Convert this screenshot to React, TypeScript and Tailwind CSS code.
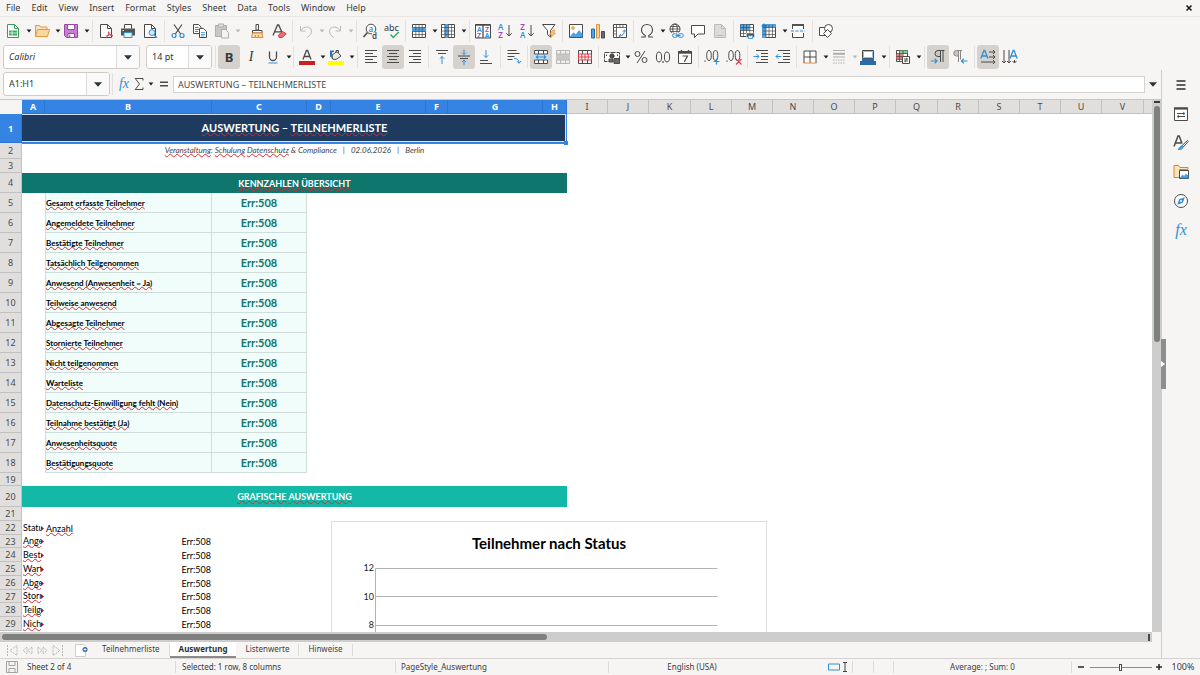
import React from 'react';

type Kids = { children?: React.ReactNode };

const BLUE = '#2f8fd8';
const INK = '#4a4a48';

const Ico = ({ children }: Kids) => (
  <svg viewBox="0 0 16 16" className="size-4 shrink-0 overflow-visible" fill="none" stroke={INK} strokeWidth="1" aria-hidden="true">
    {children}
  </svg>
);

const Caret = ({ dim = false }: { dim?: boolean }) => (
  <svg viewBox="0 0 6 4" className="h-1 w-1.5 shrink-0" aria-hidden="true">
    <path d="M0.6 0.4h4.8L3 3.6z" fill={dim ? '#b9b8b6' : '#1d1d1d'} />
  </svg>
);

type ToolProps = { label: string; active?: boolean; dim?: boolean; drop?: boolean; icon: React.ReactNode };

const Tool = ({ label, active, dim, drop, icon }: ToolProps) => (
  <span className="flex shrink-0 items-center">
    <button
      type="button"
      aria-label={label}
      aria-pressed={active}
      className={`flex h-6 w-[22px] items-center justify-center rounded-[3px] ${active ? 'bg-[#d5d1cd]' : ''}`}
    >
      {icon}
    </button>
    {drop && (
      <button type="button" aria-label={`${label} options`} className="flex h-6 w-[7px] items-center justify-center pl-[3px]">
        <Caret dim={dim} />
      </button>
    )}
  </span>
);

const Sep = ({ wide = false }: { wide?: boolean }) => (
  <span className={`flex h-[22px] shrink-0 justify-center ${wide ? 'w-1.5' : 'w-[5px]'}`}>
    <span className="w-px bg-[#e3e1df]" />
  </span>
);

/* ---------- standard toolbar icons ---------- */

const NewDoc = (
  <Ico>
    <path d="M2.500 1.500h7l4 4v9h-11z" fill="#fff" stroke="#3d9a5b" />
    <path d="M9.500 1.500v4h4" stroke="#3d9a5b" />
    <path d="M4 7.500h8v5H4z" fill="#3fa863" stroke="none" />
    <path d="M4 10h8M7 8v4.500" stroke="#fff" strokeWidth=".7" />
  </Ico>
);
const Open = (
  <Ico>
    <path d="M1.500 13.500v-11h4l1 1.500h6.500v3" fill="#fbe3bd" stroke="#e59a3c" />
    <path d="M1.500 13.500 3.600 6.500h12l-2.200 7z" fill="#fad79f" stroke="#e59a3c" />
  </Ico>
);
const Save = (
  <Ico>
    <path d="M1.500 1.500h13v13h-11l-2-2z" fill="#c77fd2" stroke="#9a45a8" />
    <path d="M4.500 1.500h7v5h-7z" fill="#fff" stroke="#9a45a8" />
    <path d="M5 10.500h6.500v4H5z" fill="#fff" stroke="#9a45a8" />
    <path d="M6.800 11.500v2.500" stroke="#9a45a8" />
  </Ico>
);
const Pdf = (
  <Ico>
    <path d="M2.500 1.500h7l4 4v9h-11z" fill="#fcfcfc" />
    <path d="M9.500 1.500v4h4" />
    <path d="M8 14.800c2-1.500 3-4 2.700-6.300M10.700 9c.6 2.600 2 3.800 4.300 4M8 13.200c2-1.300 4.500-1.700 7-.6" stroke="#e4384a" />
  </Ico>
);
const Print = (
  <Ico>
    <path d="M4.500 5.500v-4h7v4" fill="#fff" />
    <path d="M1 5.500h14v7H1z" fill="#555553" stroke="none" />
    <path d="M4 9.500h8v5H4z" fill="#e8f3fc" stroke={BLUE} />
    <path d="M2.500 7.500h1.500" stroke="#fff" />
  </Ico>
);
const Preview = (
  <Ico>
    <path d="M2.500 1.500h7l4 4v9h-11z" fill="#fcfcfc" />
    <path d="M9.500 1.500v4h4" />
    <circle cx="10" cy="9.600" r="2.900" fill="#d7eafa" stroke={BLUE} />
    <path d="m12 11.800 3 3" stroke={BLUE} strokeWidth="1.300" />
  </Ico>
);
const Cut = (
  <Ico>
    <path d="M4 1.500 10.700 11M12 1.500 5.300 11" strokeWidth="1.200" />
    <circle cx="4" cy="12.500" r="2" stroke={BLUE} strokeWidth="1.200" />
    <circle cx="12" cy="12.500" r="2" stroke={BLUE} strokeWidth="1.200" />
  </Ico>
);
const Copy = (
  <Ico>
    <path d="M1.500 1.500h5l2.500 2.500v6.500H1.500z" fill="#fff" />
    <path d="M3 4.500h3.500M3 6.500h4M3 8.500h3" stroke={BLUE} />
    <path d="M7.500 5.500h4l3 3v6h-7z" fill="#fff" />
    <path d="M9 9.500h4M9 11.500h4M9 13h3" stroke={BLUE} strokeWidth=".8" />
  </Ico>
);
const Paste = (
  <Ico>
    <path d="M1.500 2.500h11v11h-11z" fill="#c9c7c5" stroke="#b0aeac" />
    <path d="M4.500 1h5v3h-5z" fill="#e4e2e0" stroke="#b0aeac" />
    <path d="M7.500 6.500h4l3 3v5.500h-7z" fill="#f4f3f2" stroke="#b0aeac" />
  </Ico>
);
const Brush = (
  <Ico>
    <path d="M7 1.500h2.500v5.500H7z" fill="#fff" />
    <path d="M3.500 7.500h9.500v2.500H3.500z" fill="#fff" />
    <path d="M3.500 10h9.500l1 4.500H2.500z" fill="#fbd9a4" stroke="#e68e2e" />
    <path d="M6.500 12v2.500M9.500 12v2.500" stroke="#e68e2e" />
  </Ico>
);
const ClearFmt = (
  <Ico>
    <path d="M2 12.500 6.500 2h1.200L11 9.500M3.700 8.800h6.500" strokeWidth="1.300" />
    <path d="m7.500 12 4-3.500 3.700 2.300L11 14.700l-3-.4z" fill="#ee6d77" stroke="#dd3b46" />
  </Ico>
);
const Undo = (
  <Ico>
    <path d="M2.500 3v5h5" stroke="#bdbbb9" />
    <path d="M2.700 7.800C5 3 13 2.500 13.500 8c.2 3-2 5-4.500 6.500" stroke="#bdbbb9" />
  </Ico>
);
const Redo = (
  <Ico>
    <path d="M13.500 3v5h-5" stroke="#bdbbb9" />
    <path d="M13.300 7.800C11 3 3 2.500 2.500 8c-.2 3 2 5 4.500 6.500" stroke="#bdbbb9" />
  </Ico>
);

const Glyph = ({ x, y, s = 7, c, t }: { x: number; y: number; s?: number; c: string; t: string }) => (
  <text x={x} y={y} fontSize={s} fontWeight="600" fill={c} stroke="none" fontFamily="Noto Sans, sans-serif">{t}</text>
);

const Find = (
  <Ico>
    <circle cx="9" cy="6" r="4.800" fill="#fff" />
    <path d="M5.500 9.500 1.500 14" strokeWidth="1.600" />
    <Glyph x={6.600} y={8.500} s={8} c={BLUE} t="a" />
    <path d="M10 9.500h5V16h-5z" fill="#f6f5f4" stroke="none" />
    <Glyph x={10} y={15.500} s={8} c={INK} t="d" />
  </Ico>
);
const Spell = (
  <Ico>
    <text x="0" y="7.500" fontSize="9" fill="#333" stroke="none" fontFamily="Noto Sans, sans-serif">abc</text>
    <path d="m6.500 11.500 2.700 3L14.800 9" stroke="#2fa866" strokeWidth="1.300" />
  </Ico>
);
const Rows = (
  <Ico>
    <path d="M1.500 1.500h13v13h-13z" fill="#fff" />
    <path d="M1 4.500h14v4H1z" fill="#4ba3e6" stroke="none" />
    <path d="M1.500 4.500h13M1.500 8.500h13M1.500 11.500h13M4.800 1.500v13M8 1.500v13M11.200 1.500v13" strokeWidth=".7" />
  </Ico>
);
const Cols = (
  <Ico>
    <path d="M1.500 1.500h13v13h-13z" fill="#fff" />
    <path d="M4.800 1h3.700v14H4.800z" fill="#4ba3e6" stroke="none" />
    <path d="M1.500 4.500h13M1.500 8h13M1.500 11.500h13M4.800 1.500v13M8.500 1.500v13M11.500 1.500v13" strokeWidth=".7" />
  </Ico>
);
const Sort = (
  <Ico>
    <path d="M.5 1.500h15v13.500H.5z" fill="#fff" />
    <path d="M.5 2h15M8 1.500V15" strokeWidth="1.300" />
    <Glyph x={2} y={8.500} c={BLUE} t="A" />
    <Glyph x={2} y={14.500} c="#a347b8" t="Z" />
    <Glyph x={10} y={8.500} c="#a347b8" t="Z" />
    <Glyph x={9.700} y={14.500} c={BLUE} t="A" />
  </Ico>
);
const AZ = (
  <Ico>
    <Glyph x={1} y={7} s={8} c={BLUE} t="A" />
    <Glyph x={1.300} y={15} s={8} c="#a347b8" t="Z" />
    <path d="M12 2v11M9.300 10.300 12 13l2.700-2.700" />
  </Ico>
);
const ZA = (
  <Ico>
    <Glyph x={1.300} y={7} s={8} c="#a347b8" t="Z" />
    <Glyph x={1} y={15} s={8} c={BLUE} t="A" />
    <path d="M12 2v11M9.300 10.300 12 13l2.700-2.700" />
  </Ico>
);
const Filter = (
  <Ico>
    <path d="M1.500 1.500h12.500L9.500 7.500v6.500l-3-2.500v-4z" fill="#fff" />
    <path d="m12 7-3.500 4.500h2.500L9.500 15l5-5h-2.500l2-3z" fill="#fbc77e" stroke="#e68e2e" strokeWidth=".7" />
  </Ico>
);
const Picture = (
  <Ico>
    <path d="M1.500 1.500h13v13h-13z" fill="#fff" />
    <circle cx="5" cy="5" r="1.500" fill="#f5b35d" stroke="#e68e2e" strokeWidth=".6" />
    <path d="m2 13.800 3.500-4 2.500 2 3-4.300 3.200 3.500v3z" fill="#4ba3e6" stroke={BLUE} strokeWidth=".6" />
  </Ico>
);
const ChartIco = (
  <Ico>
    <path d="M1.500 6h3v9h-3z" fill="#4ba3e6" stroke="#1f6fb5" />
    <path d="M6.500 1.500h3V15h-3z" fill="#fbd39a" stroke="#e68e2e" />
    <path d="M11.500 8.500h3V15h-3z" fill="#6a6a68" stroke={INK} />
  </Ico>
);
const Pivot = (
  <Ico>
    <path d="M1.500 1.500h13v13h-13z" fill="#fff" />
    <path d="M1.500 4.500h13M4.500 1.500v13M8 1.500v3M11 1.500v3M1.500 8h3M1.500 11h3" strokeWidth=".8" />
    <path d="M7 13c3.500 0 5.500-2 5.500-5.500M10.800 8.800l1.700-2 1.700 2M8.800 11.300l-2 1.700 2 1.700" stroke={BLUE} />
  </Ico>
);
const Omega = (
  <Ico>
    <path d="M2 14h4.200v-1.600C3.700 11 2.500 9.200 2.500 6.900 2.500 3.600 4.900 1.500 8 1.500s5.500 2.100 5.500 5.400c0 2.300-1.200 4.100-3.700 5.500V14H14" strokeWidth="1.100" />
  </Ico>
);
const LinkIco = (
  <Ico>
    <circle cx="7" cy="6" r="5" fill="#fff" />
    <ellipse cx="7" cy="6" rx="2.200" ry="5" />
    <path d="M2 6h10M2.600 3.500h8.800M2.600 8.500h8.800" strokeWidth=".8" />
    <path d="M4 9.500h12V16H4z" fill="#f6f5f4" stroke="none" />
    <rect x="4.500" y="10.700" width="5" height="3.600" rx="1.700" stroke={BLUE} />
    <rect x="10.300" y="10.700" width="5" height="3.600" rx="1.700" stroke={BLUE} />
    <path d="M7.500 12.500h5" stroke={BLUE} />
  </Ico>
);
const Comment = (
  <Ico>
    <path d="M1.500 2.500h13v8.500H8l-3.500 3.500V11h-3z" fill="#fff" />
  </Ico>
);
const HeadFoot = (
  <Ico>
    <path d="M2.500 1.500h7l4 4v9h-11z" fill="#dddbd9" stroke="#bdbbb9" />
    <path d="M9.500 1.500v4h4M4.500 12.500h7" stroke="#bdbbb9" />
  </Ico>
);
const PrintArea = (
  <Ico>
    <path d="M1.500 1.500h13v12h-13z" fill="#fff" />
    <path d="M1.500 1.500h9v6h-9z" fill="#4ba3e6" stroke="none" />
    <path d="M1.500 4.500h13M1.500 7.500h13M1.500 10.500h13M4.500 1.500v12M7.500 1.500v12M10.800 1.500v12" strokeWidth=".7" />
    <path d="M7.500 10h8v4.500h-8z" fill="#555553" stroke="#f6f5f4" strokeWidth=".6" />
    <path d="M9.300 12.500h4.400v3H9.300z" fill="#d7eafa" stroke={BLUE} strokeWidth=".8" />
  </Ico>
);
const Freeze = (
  <Ico>
    <path d="M1.500 1.500h13v13h-13z" fill="#fff" />
    <path d="M1 1h14v3.500H5V15H1z" fill="#4ba3e6" stroke="none" />
    <path d="M1.500 4.500h13M1.500 8h13M1.500 11.500h13M5 1.500v13M8 1.500v13M11.500 1.500v13" strokeWidth=".7" />
    <path d="M3 .5v5M.5 3h5" stroke="#1f6fb5" />
  </Ico>
);
const Split = (
  <Ico>
    <path d="M2.500 6V2h11v4M2.500 10v4.500h11V10" fill="#fff" />
    <path d="M2 2h12" strokeWidth="1.800" />
    <path d="M1 8h14" stroke={BLUE} strokeDasharray="3 1.500" />
  </Ico>
);
const Shapes = (
  <Ico>
    <path d="M1.500 4.500h8v8h-8z" fill="#fff" />
    <circle cx="10.500" cy="5.500" r="4" fill="#fff" />
    <path d="m9.500 6.500 4 4-4 4-4-4z" fill="#fff" />
  </Ico>
);

/* ---------- formatting toolbar icons ---------- */

const Bold = <span className="text-[13px] leading-none font-bold text-[#3a3a3a]">B</span>;
const Italic = <span className="font-['Liberation_Serif',serif] text-sm leading-none italic text-[#3a3a3a]">I</span>;
const Underline = (
  <Ico>
    <path d="M4.500 2.500v5.500a3.500 3.500 0 0 0 7 0V2.500" strokeWidth="1.300" />
    <path d="M3.500 14h9" stroke={BLUE} />
  </Ico>
);
const FontColor = (
  <Ico>
    <path d="M4 10.500 7.400 1.500h1.200l3.400 9M5.200 7.500h5.600" strokeWidth="1.300" />
    <path d="M0 12h16v4H0z" fill="#c9211e" stroke="none" />
  </Ico>
);
const Highlight = (
  <Ico>
    <path d="m4 6 5-3.500L13 7l-5 3.500-3.500-.5z" fill="#e9e8e6" />
    <path d="M8 4V1.500h2.500V4" />
    <path d="M2 1.500h4V3H4.300L3.700 9 2 7.500z" fill="#2472b8" stroke="none" />
    <path d="M0 12h16v4H0z" fill="#ff0" stroke="none" />
  </Ico>
);
const AlignL = <Ico><path d="M2 1.500h12M2 4.500h8M2 7.500h12M2 10.500h8M2 13.500h12" /></Ico>;
const AlignC = <Ico><path d="M2 1.500h12M4 4.500h8M2 7.500h12M4 10.500h8M2 13.500h12" /></Ico>;
const AlignR = <Ico><path d="M2 1.500h12M6 4.500h8M2 7.500h12M6 10.500h8M2 13.500h12" /></Ico>;
const Top = (
  <Ico>
    <path d="M2 1.500h12M4 4.500h8" />
    <path d="M8 15V7.500M5.800 9.700 8 7.500l2.200 2.200" stroke={BLUE} />
  </Ico>
);
const Middle = (
  <Ico>
    <path d="M2 7h12M4 9.500h8" />
    <path d="M8 .5v5M6 3.500l2 2 2-2M8 16v-5M6 13l2-2 2 2" stroke={BLUE} />
  </Ico>
);
const Bottom = (
  <Ico>
    <path d="M2 14.500h12M2 11.500h8" />
    <path d="M8 1v7.500M5.800 6.300 8 8.500l2.200-2.200" stroke={BLUE} />
  </Ico>
);
const Wrap = (
  <Ico>
    <path d="M1.500 1.500h9M1.500 4.500h12M1.500 7.500h7M1.500 10.500h5" />
    <path d="M8 9.500c3 0 5 1 5 4.500M10.800 12l2.200 2.300L15 12" stroke={BLUE} />
  </Ico>
);
const Merge = (
  <Ico>
    <path d="M1.500 1.500h13v13h-13z" fill="#fff" />
    <path d="M1 5h14v6H1z" fill="#bfe0f8" stroke="none" />
    <path d="M1.500 5h13M1.500 11h13M5.500 1.500V5M10.500 1.500V5M5.500 11v3.500M10.500 11v3.500" />
    <path d="M3 8h10M5 6.300 3.300 8 5 9.700M11 6.300 12.700 8 11 9.700" stroke={BLUE} strokeWidth="1.200" />
  </Ico>
);
const MergeCells = (
  <Ico>
    <path d="M1.500 1.500h13v13h-13z" fill="#f0efee" stroke="#b9b7b5" />
    <path d="M1 5h14v6H1z" fill="#c9c7c5" stroke="none" />
    <path d="M1.500 5h13M1.500 11h13M5.500 1.500V5M10.500 1.500V5M5.500 11v3.500M10.500 11v3.500" stroke="#b9b7b5" />
  </Ico>
);
const SplitCells = (
  <Ico>
    <path d="M1.500 1.500h13v13h-13z" fill="#fff" />
    <path d="M5.500 1.500V5M10.500 1.500V5M5.500 11v3.500M10.500 11v3.500" />
    <path d="M1.500 5h13v6h-13zM4.800 5v6M8 5v6M11.200 5v6M1.500 8h13" fill="#fff" stroke="#dd3b46" />
  </Ico>
);
const Currency = (
  <Ico>
    <path d="M.5 3.500h15v9H.5z" fill="#fff" strokeDasharray="5 1" />
    <circle cx="8" cy="7" r="2.200" fill={INK} />
    <path d="M10 9.500h5.500v5H10zM5 10h4v3H5z" fill="#6a6a68" stroke={INK} />
    <path d="M2.500 5.500v1.500M13.500 5.500V7" />
  </Ico>
);
const Percent = (
  <Ico>
    <circle cx="4.500" cy="5" r="2.500" />
    <circle cx="11.500" cy="11" r="2.500" />
    <path d="M12 2 4 14" />
  </Ico>
);
const Num = (
  <Ico>
    <ellipse cx="4" cy="8" rx="2.600" ry="5" />
    <ellipse cx="12" cy="8" rx="2.600" ry="5" />
    <path d="M8 12v2" strokeWidth="1.200" />
  </Ico>
);
const DateIco = (
  <Ico>
    <path d="M1.500 2.500h13v12h-13z" fill="#fff" />
    <path d="M1 3.500h14" strokeWidth="2.400" />
    <path d="M4.500 1v2M11.500 1v2" strokeWidth="1.400" />
    <path d="M5.500 7h5L7.300 13" strokeWidth="1.200" />
  </Ico>
);
const AddDec = (
  <Ico>
    <path d="M1 11.500v1.200" strokeWidth="1.200" />
    <ellipse cx="5" cy="6.500" rx="2.300" ry="5" />
    <ellipse cx="11.500" cy="6.500" rx="2.300" ry="5" />
    <path d="M12.500 9.500v6M9.500 12.500h6" stroke={BLUE} strokeWidth="1.200" />
  </Ico>
);
const DelDec = (
  <Ico>
    <path d="M1 11.500v1.200" strokeWidth="1.200" />
    <ellipse cx="5" cy="6.500" rx="2.300" ry="5" />
    <ellipse cx="11.500" cy="6.500" rx="2.300" ry="5" />
    <path d="m10 10 5.500 5.500M15.500 10 10 15.500" stroke="#e4384a" strokeWidth="1.100" />
  </Ico>
);
const Indent = (
  <Ico>
    <path d="M3 1.500h12M8 4.500h7M8 7.500h7M8 10.500h7M3 13.500h12" />
    <path d="M.5 7.500h5.500M3.700 5.200 6 7.500 3.700 9.800" stroke={BLUE} />
  </Ico>
);
const Outdent = (
  <Ico>
    <path d="M3 1.500h12M8 4.500h7M8 7.500h7M8 10.500h7M3 13.500h12" />
    <path d="M1 7.500h5.500M3.300 5.200 1 7.500l2.300 2.300" stroke={BLUE} />
  </Ico>
);
const Borders = (
  <Ico>
    <path d="M2 14V2h12v12M8 2v12M2 8h12" fill="#fff" />
    <path d="M1.500 14h13" stroke="#e68e2e" />
  </Ico>
);
const LineStyle = (
  <Ico>
    <path d="M2 1.500h12M2 8h12" stroke="#b0aeac" />
    <path d="M2 4.800h12" stroke="#b0aeac" strokeWidth="2" />
    <path d="M2 11h12M2 14h12" stroke="#b0aeac" strokeDasharray="1.500 1" />
  </Ico>
);
const BorderColor = (
  <Ico>
    <path d="M2.500 1.500h11v8h-11z" fill="#fff" />
    <path d="M3.500 2.500h9v6h-9z" stroke="#8bc3ee" />
    <path d="M0 12h16v4H0zM2 9.500h12V12H2z" fill="#2a6ba8" stroke="none" />
  </Ico>
);
const Cond = (
  <Ico>
    <path d="M1.500 1.500h11v11h-11z" fill="#fff" />
    <path d="M4.500 1.500h8v3h-8z" fill="#7fcf8c" stroke="none" />
    <path d="M1.500 5h6v5h-6z" fill="#ef7b80" stroke="none" />
    <path d="M1.500 4.500h11M1.500 7.500h11M1.500 10.500h11M4.500 1.500v11M8 1.500v11" strokeWidth=".8" />
    <path d="M7.500 7.500h7v7h-7z" fill="#fff" />
    <path d="M9 10h4M9 12h4M12 8.800 10 13.300" strokeWidth=".9" />
  </Ico>
);
const Ltr = (
  <Ico>
    <path d="M10.500 13V1.500H8a3 3 0 0 0 0 6h2.500" fill="#c9c5c1" />
    <path d="M13 13V1.500M14.500 1.500h-4" />
    <path d="M1 12h6M4.700 9.700 7 12l-2.300 2.300" stroke={BLUE} strokeWidth="1.200" />
  </Ico>
);
const Rtl = (
  <Ico>
    <path d="M6.500 13V1.500H4.500a2.700 2.700 0 0 0 0 5.500h2" fill="#c9c7c5" stroke="#8a8886" />
    <path d="M8.500 10.500v-9M10 1.500H6.500" stroke="#8a8886" />
    <path d="M9.500 12h6M11.800 9.700 9.500 12l2.300 2.300" stroke={BLUE} strokeWidth="1.200" />
  </Ico>
);
const TextLr = (
  <Ico>
    <path d="M.8 9.500 4 1.500h.8L8 9.500M2 7h5" stroke={BLUE} strokeWidth="1.300" />
    <path d="M9 3h6M13 1l2 2-2 2M9 8h6M13 6l2 2-2 2M1 13h14M13 11l2 2-2 2" />
  </Ico>
);
const TextTd = (
  <Ico>
    <path d="M8 9.500 11.200 1.500h.8L15.200 9.500M9 7h5" stroke={BLUE} strokeWidth="1.300" />
    <path d="M2 1v13M0 12l2 2 2-2M7 1v13M5 12l2 2 2-2M12.500 11v3M10.500 12l2 2 2-2" />
  </Ico>
);

/* ---------- sidebar icons ---------- */

const Burger = <Ico><path d="M3.500 4h9M3.500 8h9M3.500 12h9" stroke="#2e2e2e" strokeWidth="1.400" /></Ico>;
const Props = (
  <Ico>
    <path d="M1.500 2v12.500h13V2z" fill="#fff" />
    <path d="M1 2.500h14" strokeWidth="2.200" />
    <path d="M4 7.500h8M4 10.500h8" />
    <path d="m10 6 2 1.500L10 9M6 9l-2 1.500L6 12" stroke={BLUE} />
  </Ico>
);
const StylesIco = (
  <Ico>
    <path d="M1 11.500 5 1h1.200L9 8.500M2.300 8h6" strokeWidth="1.500" />
    <path d="m8.500 11 6-5.500.8.900-5.300 6z" fill="#fff" />
    <path d="M5 14.500c1.500-.5 1.500-3.500 4-3.200 1.500.8 1 3.700-4 3.200z" fill="#4ba3e6" stroke={BLUE} />
  </Ico>
);
const Gallery = (
  <Ico>
    <path d="M1 13.500V1.500h4.500L7 3.500h8v2" fill="#fbe3bd" stroke="#e68024" />
    <path d="M1 13.500h5.500V5.500h8.500" fill="#fbe3bd" stroke="#e68024" />
    <path d="M6.500 6.500h9v8h-9z" fill="#fff" stroke={INK} />
    <path d="m7 14 2.500-3 1.700 1.500 1.800-2.500L15 12v2z" fill="#4ba3e6" stroke={BLUE} strokeWidth=".6" />
  </Ico>
);
const Compass = (
  <Ico>
    <circle cx="8" cy="8" r="6.500" fill="#fff" />
    <path d="m11.800 4.200-2 5.600-5.600 2 2-5.600z" fill="#2f8fd8" stroke="none" />
    <circle cx="8" cy="8" r="1" fill="#fff" stroke="none" />
  </Ico>
);
const Fx = <span className="font-['Liberation_Serif',serif] text-base leading-none italic text-[#2f8fd8]">fx</span>;

const menus = ['File', 'Edit', 'View', 'Insert', 'Format', 'Styles', 'Sheet', 'Data', 'Tools', 'Window', 'Help'];

type ComboProps = { label: string; value: string; box: string; italic?: boolean };

const Combo = ({ label, value, box, italic }: ComboProps) => (
  <div className={`flex h-6 shrink-0 overflow-hidden rounded-[3px] border border-[#cfcbc7] bg-white ${box}`}>
    <input
      aria-label={label}
      defaultValue={value}
      className={`min-w-0 flex-1 bg-transparent pl-[5px] text-[9px] text-[#2e3436] outline-none ${italic ? 'italic' : ''}`}
    />
    <button type="button" aria-label={`${label} list`} className="flex w-[23px] items-center justify-center border-l border-[#dedbd8] bg-[#fbfafa]">
      <svg viewBox="0 0 8 5" className="h-[5px] w-2" aria-hidden="true"><path d="M0 .3h8L4 4.700z" fill="#2e3436" /></svg>
    </button>
  </div>
);

const colWidths = [22, 23, 167, 95, 24, 95, 22, 95, 24, 41, 41, 42, 41, 41, 41, 41, 41, 42, 41, 41, 41, 41, 42];
const colNames = 'ABCDEFGHIJKLMNOPQRSTUV'.split('');

const kpis = [
  'Gesamt erfasste Teilnehmer',
  'Angemeldete Teilnehmer',
  'Bestätigte Teilnehmer',
  'Tatsächlich Teilgenommen',
  'Anwesend (Anwesenheit = Ja)',
  'Teilweise anwesend',
  'Abgesagte Teilnehmer',
  'Stornierte Teilnehmer',
  'Nicht teilgenommen',
  'Warteliste',
  'Datenschutz-Einwilligung fehlt (Nein)',
  'Teilnahme bestätigt (Ja)',
  'Anwesenheitsquote',
  'Bestätigungsquote',
];

const statuses = ['Angemeldet', 'Bestätigt', 'Warteliste', 'Abgesagt', 'Storniert', 'Teilgenommen', 'Nicht teilg.'];

const Wavy = ({ children }: Kids) => (
  <span className="underline decoration-[#e0262c] decoration-wavy decoration-1 underline-offset-0 [text-decoration-skip-ink:none]">
    {children}
  </span>
);

const RowHead = ({ n, selected = false }: { n: number; selected?: boolean }) => (
  <th
    scope="row"
    className={`border-r border-b p-0 text-center font-["Noto_Sans",sans-serif] text-[9px] leading-none ${
      selected ? 'border-[#2a76d2] bg-[#3584e4] font-bold text-white' : 'border-[#c3c1bf] bg-[#e1dfdd] font-normal text-[#4a4a4a]'
    }`}
  >
    {n}
  </th>
);

const Clipped = ({ children, wavy = true }: Kids & { wavy?: boolean }) => (
  <div className="flex w-[22px] items-center">
    <div className="h-[13px] w-[19px] overflow-hidden pl-px leading-[12px] whitespace-nowrap">{wavy ? <Wavy>{children}</Wavy> : children}</div>
    <svg viewBox="0 0 3 5" className="h-[5px] w-[3px]" aria-hidden="true"><path d="M0 0 3 2.500 0 5z" fill="#a3122a" /></svg>
  </div>
);

const Rest = () => <td colSpan={15} className="p-0" />;

const Blank = ({ n, h }: { n: number; h: string }) => (
  <tr className={h}>
    <RowHead n={n} />
    <td colSpan={8} className="p-0" />
    <Rest />
  </tr>
);

const Bar = () => <span className="mx-1.5">|</span>;

const Sheet = () => (
  <div className="relative min-h-0 min-w-0 flex-1 overflow-hidden bg-white">
    <table className="w-full table-fixed border-separate border-spacing-0 font-[Lato,sans-serif]">
      <colgroup>
        {colWidths.map((w, i) => <col key={i} style={{ width: w }} />)}
        <col />
      </colgroup>
      <thead>
        <tr className="h-3.5 font-['Noto_Sans',sans-serif] text-[9px] leading-none">
          <td className="bg-[#f6f5f4] p-0" />
          {colNames.map((c, i) => (
            <th
              key={c}
              scope="col"
              className={`border-r border-b p-0 text-center ${
                i < 8 ? 'border-[#2a76d2] bg-[#3584e4] font-bold text-white' : 'border-[#c3c1bf] bg-[#e1dfdd] font-normal text-[#4a4a4a]'
              }`}
            >
              {c}
            </th>
          ))}
          <td className="border-b border-[#c3c1bf] bg-[#e1dfdd] p-0" />
        </tr>
      </thead>
      <tbody>
        <tr className="h-[29px]">
          <RowHead n={1} selected />
          <td colSpan={8} className="bg-[#1e3a5f] p-0 pb-0.5 text-center text-[11px] leading-none font-bold text-white">
            <Wavy>AUSWERTUNG</Wavy> – <Wavy>TEILNEHMERLISTE</Wavy>
          </td>
          <Rest />
        </tr>
        <tr className="h-4">
          <RowHead n={2} />
          <td colSpan={8} className="p-0 pb-0.5 text-center text-[8px] leading-none text-[#3f464c] italic">
            <Wavy>Veranstaltung</Wavy>: <Wavy>Schulung</Wavy> <Wavy>Datenschutz</Wavy> &amp; Compliance
            <Bar />02.06.2026<Bar />Berlin
          </td>
          <Rest />
        </tr>
        <Blank n={3} h="h-3.5" />
        <tr className="h-5">
          <RowHead n={4} />
          <td colSpan={8} className="bg-[#0f766e] p-0 text-center text-[9px] leading-none font-bold text-white">
            <Wavy>KENNZAHLEN</Wavy> <Wavy>ÜBERSICHT</Wavy>
          </td>
          <Rest />
        </tr>
        {kpis.map((k, i) => (
          <tr key={k} className="h-5">
            <RowHead n={i + 5} />
            <td className="p-0" />
            <td className="border-r border-b border-l border-[#cfdedb] bg-[#f0fdfa] p-0 text-[8px] leading-none font-bold whitespace-nowrap text-black">
              <Wavy>{k}</Wavy>
            </td>
            <td className="border-r border-b border-[#cfdedb] bg-[#f0fdfa] p-0 text-center text-[11px] leading-none font-bold text-[#0f766e]">
              Err:508
            </td>
            <td colSpan={5} className="p-0" />
            <Rest />
          </tr>
        ))}
        <Blank n={19} h="h-[13px]" />
        <tr className="h-[21px]">
          <RowHead n={20} />
          <td colSpan={8} className="bg-[#14b8a6] p-0 text-center text-[9px] leading-none font-bold text-white">
            <Wavy>GRAFISCHE</Wavy> <Wavy>AUSWERTUNG</Wavy>
          </td>
          <Rest />
        </tr>
        <Blank n={21} h="h-3.5" />
        <tr className="h-3.5 text-[9px] leading-none text-black">
          <RowHead n={22} />
          <td className="p-0"><Clipped wavy={false}>Status</Clipped></td>
          <td className="p-0 pl-px"><Wavy>Anzahl</Wavy></td>
          <td colSpan={6} className="p-0" />
          <Rest />
        </tr>
        {statuses.map((s, i) => (
          <tr key={s} className={`text-[9px] leading-none text-black ${i === 0 || i === 4 ? 'h-[13px]' : 'h-3.5'}`}>
            <RowHead n={i + 23} />
            <td className="p-0"><Clipped>{s}</Clipped></td>
            <td className="p-0 pr-px text-right">Err:508</td>
            <td colSpan={6} className="p-0" />
            <Rest />
          </tr>
        ))}
      </tbody>
    </table>

    <div className="pointer-events-none absolute top-3.5 left-[22px] h-[30px] w-[545px] border-r border-b-2 border-[#3584e4]">
      <div className="size-full border-t border-r border-b border-[#d4e4f7]" />
      <span className="absolute -right-0.5 -bottom-[3px] size-1 bg-[#3584e4]" />
    </div>

    <div className="absolute top-[421px] left-[331px] w-[436px] border border-[#dedede] bg-white font-[Lato,sans-serif]">
      <h2 className="mt-[11px] mb-px text-center text-[15px] leading-5 font-bold text-black">Teilnehmer nach Status</h2>
      <svg viewBox="0 0 434 100" className="h-[100px] w-[434px]" aria-hidden="true">
        <path d="M43.500 14.500v86M43.500 14.500h342M43.500 42.500h342M43.500 71.500h342" fill="none" stroke="#b3b3b3" />
        <g fontFamily="Lato, sans-serif" fontSize="9" fill="#222" textAnchor="end">
          <text x="42" y="17">12</text>
          <text x="42" y="46">10</text>
          <text x="42" y="74">8</text>
        </g>
      </svg>
    </div>
  </div>
);

const NavIcons = () => (
  <div className="flex w-[60px] items-center gap-0.5 pl-1.5">
    {[
      ['First sheet', 'M1.500 1v11M11 1.500 4 6.500l7 5z'],
      ['Previous sheet', 'M6 3 2 6.500 6 10zM11 3 7 6.500l4 3.500z'],
      ['Next sheet', 'M2 3l4 3.500L2 10zM7 3l4 3.500L7 10z'],
      ['Last sheet', 'M11.500 1v11M2 1.500l7 5-7 5z'],
    ].map(([label, d]) => (
      <button key={label} type="button" aria-label={label}>
        <svg viewBox="0 0 13 13" className="size-[13px]" fill="none" stroke="#b9b7b5" strokeDasharray="2 1" aria-hidden="true"><path d={d} /></svg>
      </button>
    ))}
  </div>
);

const Tab = ({ name, active = false }: { name: string; active?: boolean }) => (
  <button
    type="button"
    role="tab"
    aria-selected={active}
    className={`h-full border-b-2 px-[9px] text-[8px] leading-none ${
      active ? 'border-[#8b8b89] bg-white font-bold text-[#2e2e2e]' : 'border-transparent text-[#3d3d3d]'
    }`}
  >
    {name}
  </button>
);

const StatusSep = () => <span className="h-3 w-px shrink-0 bg-[#dddbd9]" />;

export default function App() {
  return (
    <div className="flex h-screen flex-col overflow-hidden bg-[#f6f5f4] font-['Noto_Sans',sans-serif] text-[9px] text-[#3a3a3a]">
      <header className="flex h-[17px] shrink-0 items-center justify-between border-b border-[#e9e7e5] pl-1.5">
        <nav aria-label="Main menu" className="flex gap-[11px]">
          {menus.map((m) => <button key={m} type="button" className="leading-4">{m}</button>)}
        </nav>
        <button type="button" aria-label="Close document" className="flex w-[22px] justify-center">
          <svg viewBox="0 0 8 8" className="size-2" stroke="#222" strokeWidth="1.700" aria-hidden="true"><path d="m1.500 1.500 5 5M6.500 1.500l-5 5" /></svg>
        </button>
      </header>

      <div role="toolbar" aria-label="Standard" className="flex h-[27px] shrink-0 items-center pl-0.5">
        <Tool label="New" drop icon={NewDoc} />
        <Tool label="Open" drop icon={Open} />
        <Tool label="Save" drop icon={Save} />
        <Sep wide />
        <Tool label="Export as PDF" icon={Pdf} />
        <Tool label="Print" icon={Print} />
        <Tool label="Print preview" icon={Preview} />
        <Sep wide />
        <Tool label="Cut" icon={Cut} />
        <Tool label="Copy" icon={Copy} />
        <Tool label="Paste" drop dim icon={Paste} />
        <span className="w-1.5 shrink-0" />
        <Tool label="Clone formatting" icon={Brush} />
        <Tool label="Clear formatting" icon={ClearFmt} />
        <Sep />
        <Tool label="Undo" drop dim icon={Undo} />
        <Tool label="Redo" drop dim icon={Redo} />
        <Sep wide />
        <Tool label="Find and replace" icon={Find} />
        <Tool label="Spelling" icon={Spell} />
        <Sep />
        <Tool label="Row" drop icon={Rows} />
        <Tool label="Column" drop icon={Cols} />
        <Sep wide />
        <Tool label="Sort" icon={Sort} />
        <Tool label="Sort ascending" icon={AZ} />
        <Tool label="Sort descending" icon={ZA} />
        <Tool label="AutoFilter" icon={Filter} />
        <Sep />
        <Tool label="Insert image" icon={Picture} />
        <Tool label="Insert chart" icon={ChartIco} />
        <Tool label="Pivot table" icon={Pivot} />
        <Sep />
        <Tool label="Special character" drop icon={Omega} />
        <Tool label="Hyperlink" icon={LinkIco} />
        <Tool label="Comment" icon={Comment} />
        <Tool label="Headers and footers" icon={HeadFoot} />
        <Sep />
        <Tool label="Define print area" icon={PrintArea} />
        <Tool label="Freeze rows and columns" drop icon={Freeze} />
        <Tool label="Split window" icon={Split} />
        <Sep wide />
        <Tool label="Draw functions" icon={Shapes} />
      </div>

      <div role="toolbar" aria-label="Formatting" className="flex h-[26px] shrink-0 items-center pl-[3px]">
        <Combo label="Font name" value="Calibri" italic box="w-[137px]" />
        <span className="w-1.5 shrink-0" />
        <Combo label="Font size" value="14 pt" box="w-[66px]" />
        <Sep wide />
        <Tool label="Bold" active icon={Bold} />
        <Tool label="Italic" icon={Italic} />
        <Tool label="Underline" drop icon={Underline} />
        <Sep />
        <Tool label="Font color" drop icon={FontColor} />
        <Tool label="Highlighting" drop icon={Highlight} />
        <Sep wide />
        <Tool label="Align left" icon={AlignL} />
        <Tool label="Align center" active icon={AlignC} />
        <Tool label="Align right" icon={AlignR} />
        <Sep />
        <Tool label="Align top" icon={Top} />
        <Tool label="Center vertically" active icon={Middle} />
        <Tool label="Align bottom" icon={Bottom} />
        <Sep wide />
        <Tool label="Wrap text" icon={Wrap} />
        <Sep />
        <Tool label="Merge and center" active icon={Merge} />
        <Tool label="Merge cells" icon={MergeCells} />
        <Tool label="Unmerge cells" icon={SplitCells} />
        <Sep />
        <Tool label="Currency" drop icon={Currency} />
        <Tool label="Percent" icon={Percent} />
        <Tool label="Number" icon={Num} />
        <Tool label="Date" icon={DateIco} />
        <Sep />
        <Tool label="Add decimal place" icon={AddDec} />
        <Tool label="Delete decimal place" icon={DelDec} />
        <Sep />
        <Tool label="Increase indent" icon={Indent} />
        <Tool label="Decrease indent" icon={Outdent} />
        <Sep />
        <Tool label="Borders" drop icon={Borders} />
        <Tool label="Border style" drop dim icon={LineStyle} />
        <Tool label="Border color" drop icon={BorderColor} />
        <Sep wide />
        <Tool label="Conditional formatting" drop icon={Cond} />
        <Sep wide />
        <Tool label="Left to right" active icon={Ltr} />
        <Tool label="Right to left" icon={Rtl} />
        <Sep wide />
        <Tool label="Horizontal text" active icon={TextLr} />
        <Tool label="Vertical text" icon={TextTd} />
      </div>

      <div className="flex min-h-0 flex-1">
        <main className="flex min-w-0 flex-1 flex-col">
          <div className="flex h-[30px] shrink-0 items-center border-b border-[#c9c7c5] pb-px pl-[3px]">
            <Combo label="Name box" value="A1:H1" box="w-[107px]" />
            <Sep />
            <button type="button" aria-label="Function wizard" className="flex w-[18px] justify-center font-['Liberation_Serif',serif] text-sm leading-none text-[#2f8fd8] italic">fx</button>
            <button type="button" aria-label="Select function" className="flex w-[22px] items-center justify-center gap-1">
              <svg viewBox="0 0 10 14" className="h-3.5 w-2.5" fill="none" stroke={INK} aria-hidden="true"><path d="M9 3.500v-2H1.200L5.500 7l-4.300 5.500H9v-2" /></svg>
              <Caret />
            </button>
            <button type="button" aria-label="Formula" className="flex w-[18px] justify-center">
              <svg viewBox="0 0 10 8" className="h-2 w-2.5" stroke={INK} strokeWidth="1.500" aria-hidden="true"><path d="M1 2.200h8M1 5.800h8" /></svg>
            </button>
            <input
              aria-label="Input line"
              defaultValue="AUSWERTUNG – TEILNEHMERLISTE"
              className="h-[17px] min-w-0 flex-1 border border-[#d5d2cf] bg-white px-1 text-[9px] leading-none text-[#4a4a4a] outline-none"
            />
            <button type="button" aria-label="Expand formula bar" className="flex w-4 justify-center">
              <svg viewBox="0 0 8 5" className="h-[5px] w-2" aria-hidden="true"><path d="M0 .3h8L4 4.700z" fill="#2e3436" /></svg>
            </button>
          </div>

          <div className="flex min-h-0 flex-1">
            <Sheet />
            <div className="flex w-[9px] shrink-0 flex-col items-center bg-[#cdcdcd] pt-px">
              <span className="h-0.5 w-1.5 bg-[#3a3a3a]" />
              <span className="mt-[3px] h-[236px] w-1.5 rounded-full bg-[#7e807e]" />
            </div>
          </div>
          <div className="mr-[9px] flex h-[10px] shrink-0 items-center justify-between bg-[#cdcdcd] px-0.5">
            <span className="h-1.5 w-[545px] rounded-full bg-[#7e807e]" />
            <span className="h-[7px] w-0.5 bg-[#4a4a4a]" />
          </div>

          <div className="flex h-4 shrink-0 items-center">
            <NavIcons />
            <button type="button" aria-label="Add sheet" className="ml-3.5 flex h-4 w-4 items-center">
              <svg viewBox="0 0 16 16" className="size-4" aria-hidden="true">
                <path d="M1.500 2.500h8l2 2v10h-10z" fill="#fff" stroke="#cfcdcb" />
                <circle cx="11" cy="7.500" r="2.500" fill="#2f63b0" />
                <path d="M11 6v3M9.500 7.500h3" stroke="#fff" strokeWidth=".8" />
              </svg>
            </button>
            <div role="tablist" className="flex h-full items-center pl-[3px]">
              <Tab name="Teilnehmerliste" />
              <StatusSep />
              <Tab name="Auswertung" active />
              <Tab name="Listenwerte" />
              <StatusSep />
              <Tab name="Hinweise" />
              <StatusSep />
            </div>
          </div>
        </main>

        <aside className="relative flex w-[39px] shrink-0 flex-col items-center gap-[13px] border-l border-[#cfcdcb] pt-[7px]">
          {[
            ['Sidebar settings', Burger],
            ['Properties', Props],
            ['Styles', StylesIco],
            ['Gallery', Gallery],
            ['Navigator', Compass],
            ['Functions', Fx],
          ].map(([label, icon]) => (
            <button key={label as string} type="button" aria-label={label as string} className="flex size-4 items-center justify-center">
              {icon as React.ReactNode}
            </button>
          ))}
          <button type="button" aria-label="Hide sidebar" className="absolute top-[269px] -left-px flex h-[50px] w-[5px] items-center bg-[#8e8e8c]">
            <svg viewBox="0 0 4 6" className="h-1.5 w-1" aria-hidden="true"><path d="M0 0 4 3 0 6z" fill="#fff" /></svg>
          </button>
        </aside>
      </div>

      <footer className="flex h-[17px] shrink-0 items-center border-t border-[#d5d2cf] pl-1 text-[8px]">
        <svg viewBox="0 0 16 16" className="size-4" fill="none" stroke="#a3a19f" aria-hidden="true">
          <path d="M2.500 2.500h11v11h-11zM5 2.500v4h6v-4M5 13.500v-4h6v4" />
        </svg>
        <span className="w-[155px] pl-[7px]">Sheet 2 of 4</span>
        <StatusSep />
        <span className="w-[219px] pl-1.5">Selected: 1 row, 8 columns</span>
        <StatusSep />
        <span className="w-[212px] pl-[5px]">PageStyle_Auswertung</span>
        <StatusSep />
        <span className="w-[166px] text-center">English (USA)</span>
        <span className="flex flex-1 items-center">
          <span className="flex w-[77px] items-center justify-end pr-1">
            <svg viewBox="0 0 20 12" className="h-3 w-5" fill="none" aria-hidden="true">
              <path d="M.5 3h11v6H.5z" stroke={BLUE} />
              <path d="M15 1.500h4M17 1.500v9M15 10.500h4" stroke="#444" />
            </svg>
          </span>
          <StatusSep />
          <span className="w-5" />
          <StatusSep />
          <span className="w-[19px]" />
          <StatusSep />
          <span className="flex-1 text-center">Average: ; Sum: 0</span>
          <StatusSep />
        </span>
        <button type="button" aria-label="Zoom out" className="flex w-[18px] justify-center">
          <svg viewBox="0 0 8 8" className="size-2" stroke="#222" strokeWidth="1.500" aria-hidden="true"><path d="M1 4h6" /></svg>
        </button>
        <input
          type="range"
          aria-label="Zoom"
          min={0}
          max={100}
          defaultValue={49}
          className="h-2 w-[62px] appearance-none bg-transparent [&::-webkit-slider-runnable-track]:h-px [&::-webkit-slider-runnable-track]:bg-[#8e8c8a] [&::-webkit-slider-thumb]:-mt-[3px] [&::-webkit-slider-thumb]:h-[7px] [&::-webkit-slider-thumb]:w-[3px] [&::-webkit-slider-thumb]:appearance-none [&::-webkit-slider-thumb]:border [&::-webkit-slider-thumb]:border-[#4a4a4a] [&::-webkit-slider-thumb]:bg-white"
        />
        <button type="button" aria-label="Zoom in" className="flex w-[14px] justify-center">
          <svg viewBox="0 0 8 8" className="size-2" stroke="#222" strokeWidth="1.500" aria-hidden="true"><path d="M1 4h6M4 1v6" /></svg>
        </button>
        <span className="w-[34px] text-center text-[9px]">100%</span>
      </footer>
    </div>
  );
}
